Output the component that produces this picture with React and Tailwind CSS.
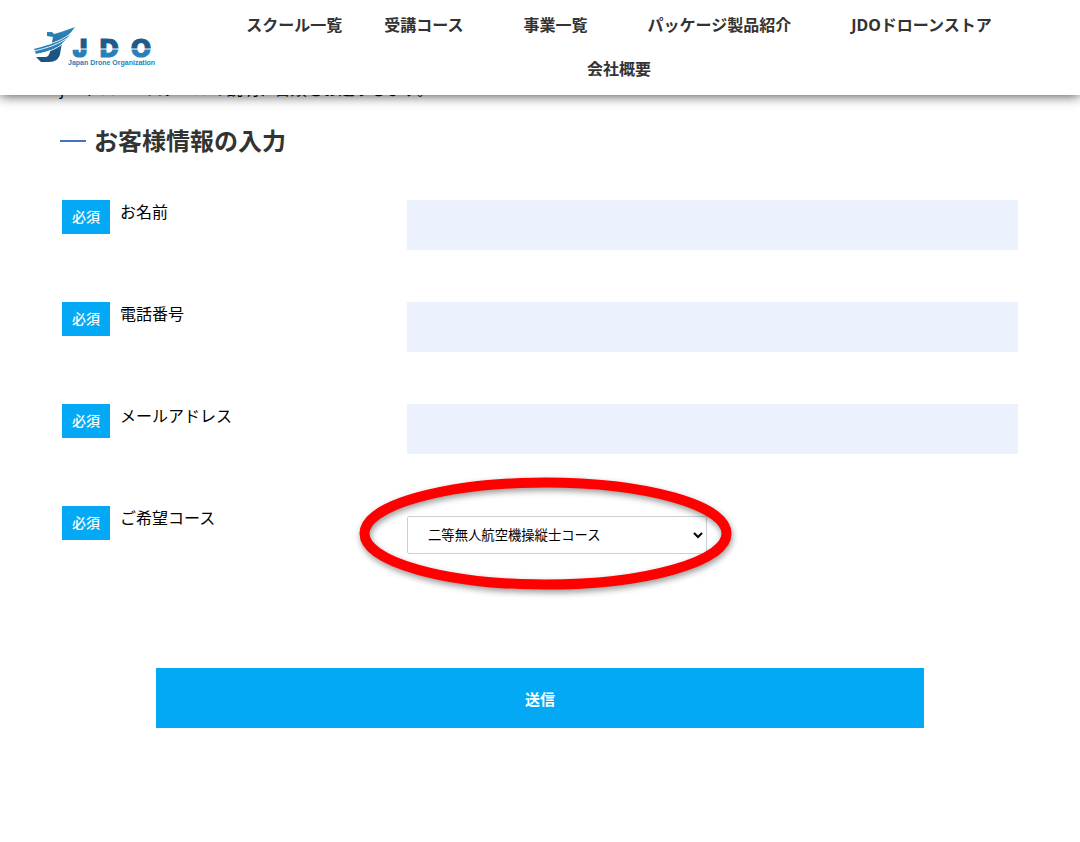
const NAV = [
  { label: "スクール一覧", pad: "pl-[30px] pr-3" },
  { label: "受講コース", pad: "px-[30px]" },
  { label: "事業一覧", pad: "px-[30px]" },
  { label: "パッケージ製品紹介", pad: "px-[30px]" },
  { label: "JDOドローンストア", pad: "px-[30px]" },
  { label: "会社概要", pad: "px-[30px]" },
];

const FIELDS = [
  { id: "name", label: "お名前", type: "text" },
  { id: "tel", label: "電話番号", type: "tel" },
  { id: "email", label: "メールアドレス", type: "email" },
];

function Logo() {
  return (
    <svg viewBox="0 0 124 44" className="h-11 w-[124px]" role="img" aria-label="JDO Japan Drone Organization">
      <defs>
        <linearGradient id="mark" x1="0" y1="0" x2="0" y2="1">
          <stop offset="0" stopColor="#2f87bd" />
          <stop offset="0.5" stopColor="#2672a5" />
          <stop offset="0.7" stopColor="#1d5482" />
          <stop offset="1" stopColor="#1d5482" />
        </linearGradient>
        <linearGradient id="word" gradientUnits="userSpaceOnUse" x1="0" y1="15" x2="0" y2="34">
          <stop offset="0.5" stopColor="#1f5a88" />
          <stop offset="0.5" stopColor="#2980b9" />
        </linearGradient>
      </defs>
      <path d="M15 8 H20 L22 10 L29 8 L43 3 L37 11 L30 19 L28 30 C27 35 23 38 17 38 H9 L4 33 H13 C16 33 17 31 18 28 L21 13 L15 12 Z" fill="url(#mark)" />
      <path d="M2 25 C14 22 27 18 38 11 C30 22 18 28 4 30 Z" fill="#2980b9" />
      <path d="M2 27 C15 24 28 20 38 12 M4 30.5 C17 28 28 24 35 15 M17 20 C24 18 32 15 39 9" fill="none" stroke="#fff" strokeWidth="0.9" />
      <g
        fill="url(#word)"
        stroke="url(#word)"
        strokeWidth="1.2"
        fontFamily="'DejaVu Sans', sans-serif"
        fontWeight="700"
        fontSize="24"
        textAnchor="middle"
      >
        <text x="48" y="33" fontFamily="Inter, sans-serif" fontWeight="900">J</text>
        <text x="77" y="33">D</text>
        <text x="109" y="33">O</text>
      </g>
      <path d="M36 25 H124" stroke="#fff" strokeWidth="1.2" />
      <text x="36" y="41" fill="#2980b9" fontFamily="'Liberation Sans', sans-serif" fontWeight="700" fontSize="7">
        Japan Drone Organization
      </text>
    </svg>
  );
}

function Required() {
  return (
    <span className="flex h-[34px] w-12 shrink-0 justify-center bg-[#03a9f4] text-sm leading-[34px] font-medium text-white">
      必須
    </span>
  );
}

export default function App() {
  return (
    <div className="min-h-screen bg-white font-['Noto_Sans','Noto_Sans_CJK_JP',sans-serif] text-black">
      <header className="sticky top-0 z-10 flex h-[95px] bg-white pl-8 shadow-[0_0_12px_rgba(0,0,0,0.8)]">
        <a href="#" className="mt-6 h-11 shrink-0">
          <Logo />
        </a>
        <nav className="flex-1 pl-0.5">
          <ul className="flex flex-wrap justify-center pt-[3px]">
            {NAV.map((item) => (
              <li key={item.label} className={item.pad}>
                <a href="#" className="block text-base leading-[44px] font-bold whitespace-nowrap text-[#333]">
                  {item.label}
                </a>
              </li>
            ))}
          </ul>
        </nav>
      </header>

      <main className="px-[60px]">
        <p className="-mt-4 text-base leading-5">jdoドローンスクールの説明、書類をお送りします。</p>
        <h2 className="mt-6 flex items-center gap-2 text-2xl leading-9 font-bold text-[#333]">
          <span className="h-0.5 w-[26px] bg-[#4472c4]" />
          お客様情報の入力
        </h2>

        <form className="mt-[41px] px-0.5" onSubmit={(e) => e.preventDefault()}>
          {FIELDS.map((f) => (
            <div key={f.id} className="flex h-[102px] items-start">
              <div className="flex w-[345px] gap-2.5">
                <Required />
                <label htmlFor={f.id} className="text-base leading-6">{f.label}</label>
              </div>
              <input id={f.id} type={f.type} className="h-[50px] min-w-0 flex-1 bg-[#ebf2fe] px-4 outline-none" />
            </div>
          ))}
          <div className="flex items-start">
            <div className="flex w-[345px] gap-2.5">
              <Required />
              <label htmlFor="course" className="text-base leading-6">ご希望コース</label>
            </div>
            <div className="relative mt-2.5">
              <select
                id="course"
                className="h-[38px] w-[300px] rounded-xs border border-[#ccd0d4] bg-white pl-4 [font-size:smaller]"
              >
                <option>二等無人航空機操縦士コース</option>
              </select>
              <svg viewBox="0 0 392 132" className="pointer-events-none absolute -top-[48px] -left-[57px] h-[132px] w-[392px] max-w-none drop-shadow-[1px_3px_3px_rgba(0,0,0,0.4)]">
                <ellipse cx="195.5" cy="65.5" rx="181" ry="51" fill="none" stroke="#ff0000" strokeWidth="10" />
              </svg>
            </div>
          </div>
          <div className="mt-[114px] flex justify-center">
            <button type="submit" className="h-[60px] w-full max-w-[768px] bg-[#03a9f4] pt-0.5 text-[15px] font-bold text-white">
              送信
            </button>
          </div>
        </form>
      </main>
    </div>
  );
}
